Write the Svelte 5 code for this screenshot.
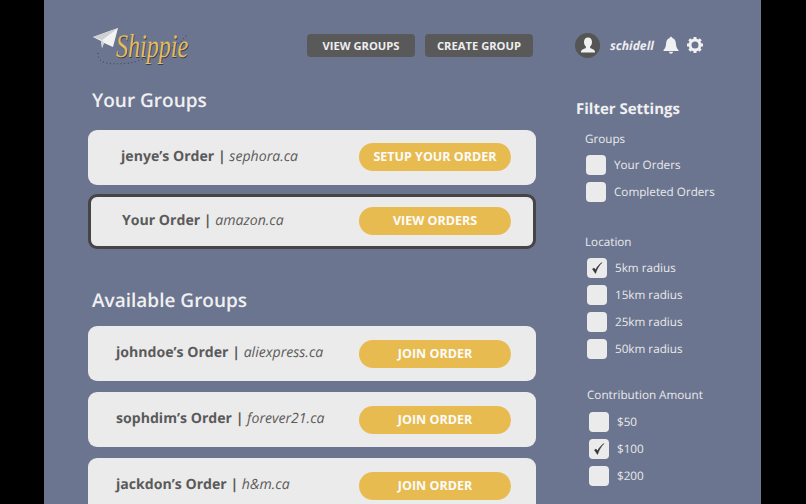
<script lang="ts">
	const yourGroups = [
		{ owner: 'jenye’s Order', store: 'sephora.ca', action: 'SETUP YOUR ORDER', inset: 'a' },
		{ owner: 'Your Order', store: 'amazon.ca', action: 'VIEW ORDERS', inset: 'b', active: true }
	];
	const available = [
		{ owner: 'johndoe’s Order', store: 'aliexpress.ca', action: 'JOIN ORDER' },
		{ owner: 'sophdim’s Order', store: 'forever21.ca', action: 'JOIN ORDER' },
		{ owner: 'jackdon’s Order', store: 'h&m.ca', action: 'JOIN ORDER' }
	];
	const filters = [
		{ title: 'Groups', cls: 'groups', items: [{ label: 'Your Orders' }, { label: 'Completed Orders' }] },
		{
			title: 'Location',
			cls: 'location',
			items: [
				{ label: '5km radius', on: true },
				{ label: '15km radius' },
				{ label: '25km radius' },
				{ label: '50km radius' }
			]
		},
		{
			title: 'Contribution Amount',
			cls: 'amount',
			items: [{ label: '$50' }, { label: '$100', on: true }, { label: '$200' }]
		}
	];
</script>

<div class="screen">
	<main class="page">
		<header class="top">
			<div class="logo">
				<svg class="logo-art" viewBox="0 0 100 50" width="100" height="50" aria-hidden="true">
					<path d="M5 25 C5 36 15 37 37 35 C55 30 80 25 94 7" fill="none" stroke="#3f4656" stroke-width="1.1" stroke-dasharray="1 2.6" />
					<path d="M0 9 L25 0 L20 19 L11 15 L9 20 L8 13 Z" fill="#f2f2f2" />
					<path d="M0 9 L25 0 L8 13 L9 20 L11 15 L9 12 Z" fill="#cfd0d3" />
				</svg>
				<span class="logo-text">Shippie</span>
			</div>
			<nav class="nav">
				<button type="button" class="nav-btn">VIEW GROUPS</button>
				<button type="button" class="nav-btn">CREATE GROUP</button>
			</nav>
			<div class="user">
				<span class="avatar">
					<svg viewBox="0 0 24 24" width="24" height="24" aria-hidden="true">
						<path d="M12 4.500c-2.600 0-4 2-4 4.400 0 2 .8 3.600 1.900 4.600v1.600c-1 .8-4.400 1.200-4.900 3.400v.9h14v-.9c-.5-2.200-3.900-2.600-4.900-3.400v-1.600c1.100-1 1.900-2.600 1.900-4.600 0-2.400-1.400-4.400-4-4.400z" fill="#f1f1f1" />
					</svg>
				</span>
				<span class="name">schidell</span>
				<svg class="bell" viewBox="0 0 18 18" width="18" height="18" aria-hidden="true">
					<path d="M9 .8c-.8 0-1.300.6-1.300 1.300C5.300 2.800 4.300 4.800 4.100 7.500c-.2 3-.8 4.700-2.600 6.600v.9h15v-.9c-1.800-1.900-2.400-3.600-2.600-6.600-.2-2.700-1.200-4.700-3.600-5.400C10.300 1.400 9.800.8 9 .8z" fill="#f1f1f1" />
					<path d="M7 15.800a2 2 0 0 0 4 0z" fill="#f1f1f1" />
				</svg>
				<svg class="gear" viewBox="0 0 18 18" width="18" height="18" aria-hidden="true">
					<circle cx="9" cy="9" r="5" fill="none" stroke="#f1f1f1" stroke-width="3" />
					<path d="M9 1v16M1 9h16M3.300 3.300l11.400 11.400M14.700 3.300L3.300 14.700" stroke="#f1f1f1" stroke-width="3" stroke-dasharray="2.800 10.400 2.800" fill="none" />
				</svg>
			</div>
		</header>

		<div class="body">
			<section class="lists">
				<h2 class="heading">Your Groups</h2>
				<div class="cards mine">
					{#each yourGroups as g}
						<div class="card" class:active={g.active}>
							<span class="label inset-{g.inset}"><b>{g.owner}</b> <b class="bar">|</b> <i>{g.store}</i></span>
							<button type="button" class="action">{g.action}</button>
						</div>
					{/each}
				</div>
				<h2 class="heading second">Available Groups</h2>
				<div class="cards">
					{#each available as g}
						<div class="card">
							<span class="label"><b>{g.owner}</b> <b class="bar">|</b> <i>{g.store}</i></span>
							<button type="button" class="action">{g.action}</button>
						</div>
					{/each}
				</div>
			</section>

			<aside class="filters">
				<h3 class="filter-title">Filter Settings</h3>
				{#each filters as f}
					<div class="filter {f.cls}">
						<div class="filter-label">{f.title}</div>
						{#each f.items as item}
							<div class="check-row">
								<span class="box">
									{#if item.on}
										<svg viewBox="0 0 14 14" width="14" height="14" aria-hidden="true">
											<path d="M2.500 8 L5.500 12.500 C7 8 9 4.500 12 1.500 C9 3.500 7 6 5.500 9 L4 7 Z" fill="#333" stroke="#333" stroke-width=".5" />
										</svg>
									{/if}
								</span>
								<span>{item.label}</span>
							</div>
						{/each}
					</div>
				{/each}
			</aside>
		</div>
	</main>
</div>

<style>
	:global(body) {
		margin: 0;
		background: #000;
	}
	.screen {
		width: 806px;
		height: 504px;
		overflow: hidden;
		background: #000;
		font-family: 'Open Sans', sans-serif;
		text-rendering: geometricPrecision;
	}
	.page {
		width: 717px;
		height: 504px;
		margin-left: 44px;
		background: #6b7590;
		box-sizing: border-box;
		padding: 0 0 0 44px;
	}
	.top {
		display: flex;
		align-items: center;
		height: 72px;
		padding-top: 18px;
		box-sizing: border-box;
	}
	.logo {
		position: relative;
		width: 100px;
		height: 50px;
		margin-left: 5px;
		margin-top: 16px;
		flex: none;
	}
	.logo-art {
		position: absolute;
		left: 0;
		top: 0;
	}
	.logo-text {
		position: absolute;
		left: 23px;
		top: 0;
		font-family: 'Liberation Serif', serif;
		font-style: italic;
		font-size: 33px;
		color: #e5bc5f;
		text-shadow: 1px 1px 0 #3a3d45;
		line-height: 38px;
		transform: scaleX(0.73);
		transform-origin: left center;
	}
	.nav {
		display: flex;
		gap: 10px;
		margin-left: 114px;
	}
	.nav-btn {
		width: 108px;
		height: 23px;
		padding: 0;
		border: 0;
		border-radius: 4px;
		background: #595959;
		color: #eee;
		font: 700 11.2px 'Open Sans', sans-serif;
	}
	.user {
		display: flex;
		align-items: center;
		margin-left: 42px;
	}
	.avatar {
		width: 25px;
		height: 25px;
		border-radius: 50%;
		background: #555;
		display: flex;
		align-items: center;
		justify-content: center;
	}
	.name {
		margin-left: 10px;
		color: #eee;
		font-size: 12.2px;
		font-weight: 700;
		font-style: italic;
	}
	.bell {
		margin-left: 8px;
	}
	.gear {
		margin-left: 6px;
	}
	.body {
		display: flex;
	}
	.lists {
		width: 448px;
		flex: none;
	}
	.heading {
		margin: 15px 0 0 4px;
		height: 43px;
		font-size: 19px;
		line-height: 27px;
		font-weight: 600;
		color: #f0f0f0;
	}
	.second {
		margin-top: 38px;
		height: 39px;
	}
	.cards {
		display: flex;
		flex-direction: column;
		gap: 11px;
	}
	.mine {
		gap: 9px;
	}
	.mine .action {
		margin-top: -2px;
	}
	.card {
		display: flex;
		align-items: center;
		justify-content: space-between;
		height: 55px;
		padding: 0 25px 0 28px;
		box-sizing: border-box;
		border-radius: 9px;
		background: #ebebeb;
	}
	.active {
		border: 3px solid #454545;
		padding: 0 22px 0 31px;
	}
	.inset-a {
		margin-left: 5px;
	}
	.inset-b {
		margin-left: 0;
	}
	.label {
		font-size: 14.1px;
		color: #5a5a5a;
		margin-top: -2px;
	}
	.label b {
		font-weight: 700;
	}
	.label i {
		font-weight: 400;
	}
	.action {
		width: 152px;
		height: 28px;
		padding: 0;
		border: 0;
		border-radius: 14px;
		background: #e8bb50;
		color: #fbfbfb;
		font: 700 12.5px 'Open Sans', sans-serif;
	}
	.filters {
		margin-left: 40px;
		color: #eaeaea;
		font-size: 11.7px;
	}
	.filter-title {
		margin: 26px 0 0;
		font-size: 15px;
		line-height: 22px;
		font-weight: 700;
		color: #f0f0f0;
	}
	.filter-label {
		line-height: 18px;
		margin-bottom: 7px;
	}
	.check-row {
		display: flex;
		align-items: center;
		height: 20px;
		margin-bottom: 7px;
		gap: 8px;
	}
	.box {
		width: 20px;
		height: 20px;
		flex: none;
		border-radius: 4px;
		background: #ebebeb;
		display: flex;
		align-items: center;
		justify-content: center;
	}
	.groups {
		margin: 10px 0 0 9px;
	}
	.groups .box {
		margin-left: 1px;
	}
	.location {
		margin: 31px 0 0 9px;
	}
	.location .box {
		margin-left: 2px;
	}
	.amount {
		margin: 27px 0 0 11px;
	}
	.amount .filter-label {
		margin-bottom: 8px;
	}
	.amount .box {
		margin-left: 2px;
	}
</style>
